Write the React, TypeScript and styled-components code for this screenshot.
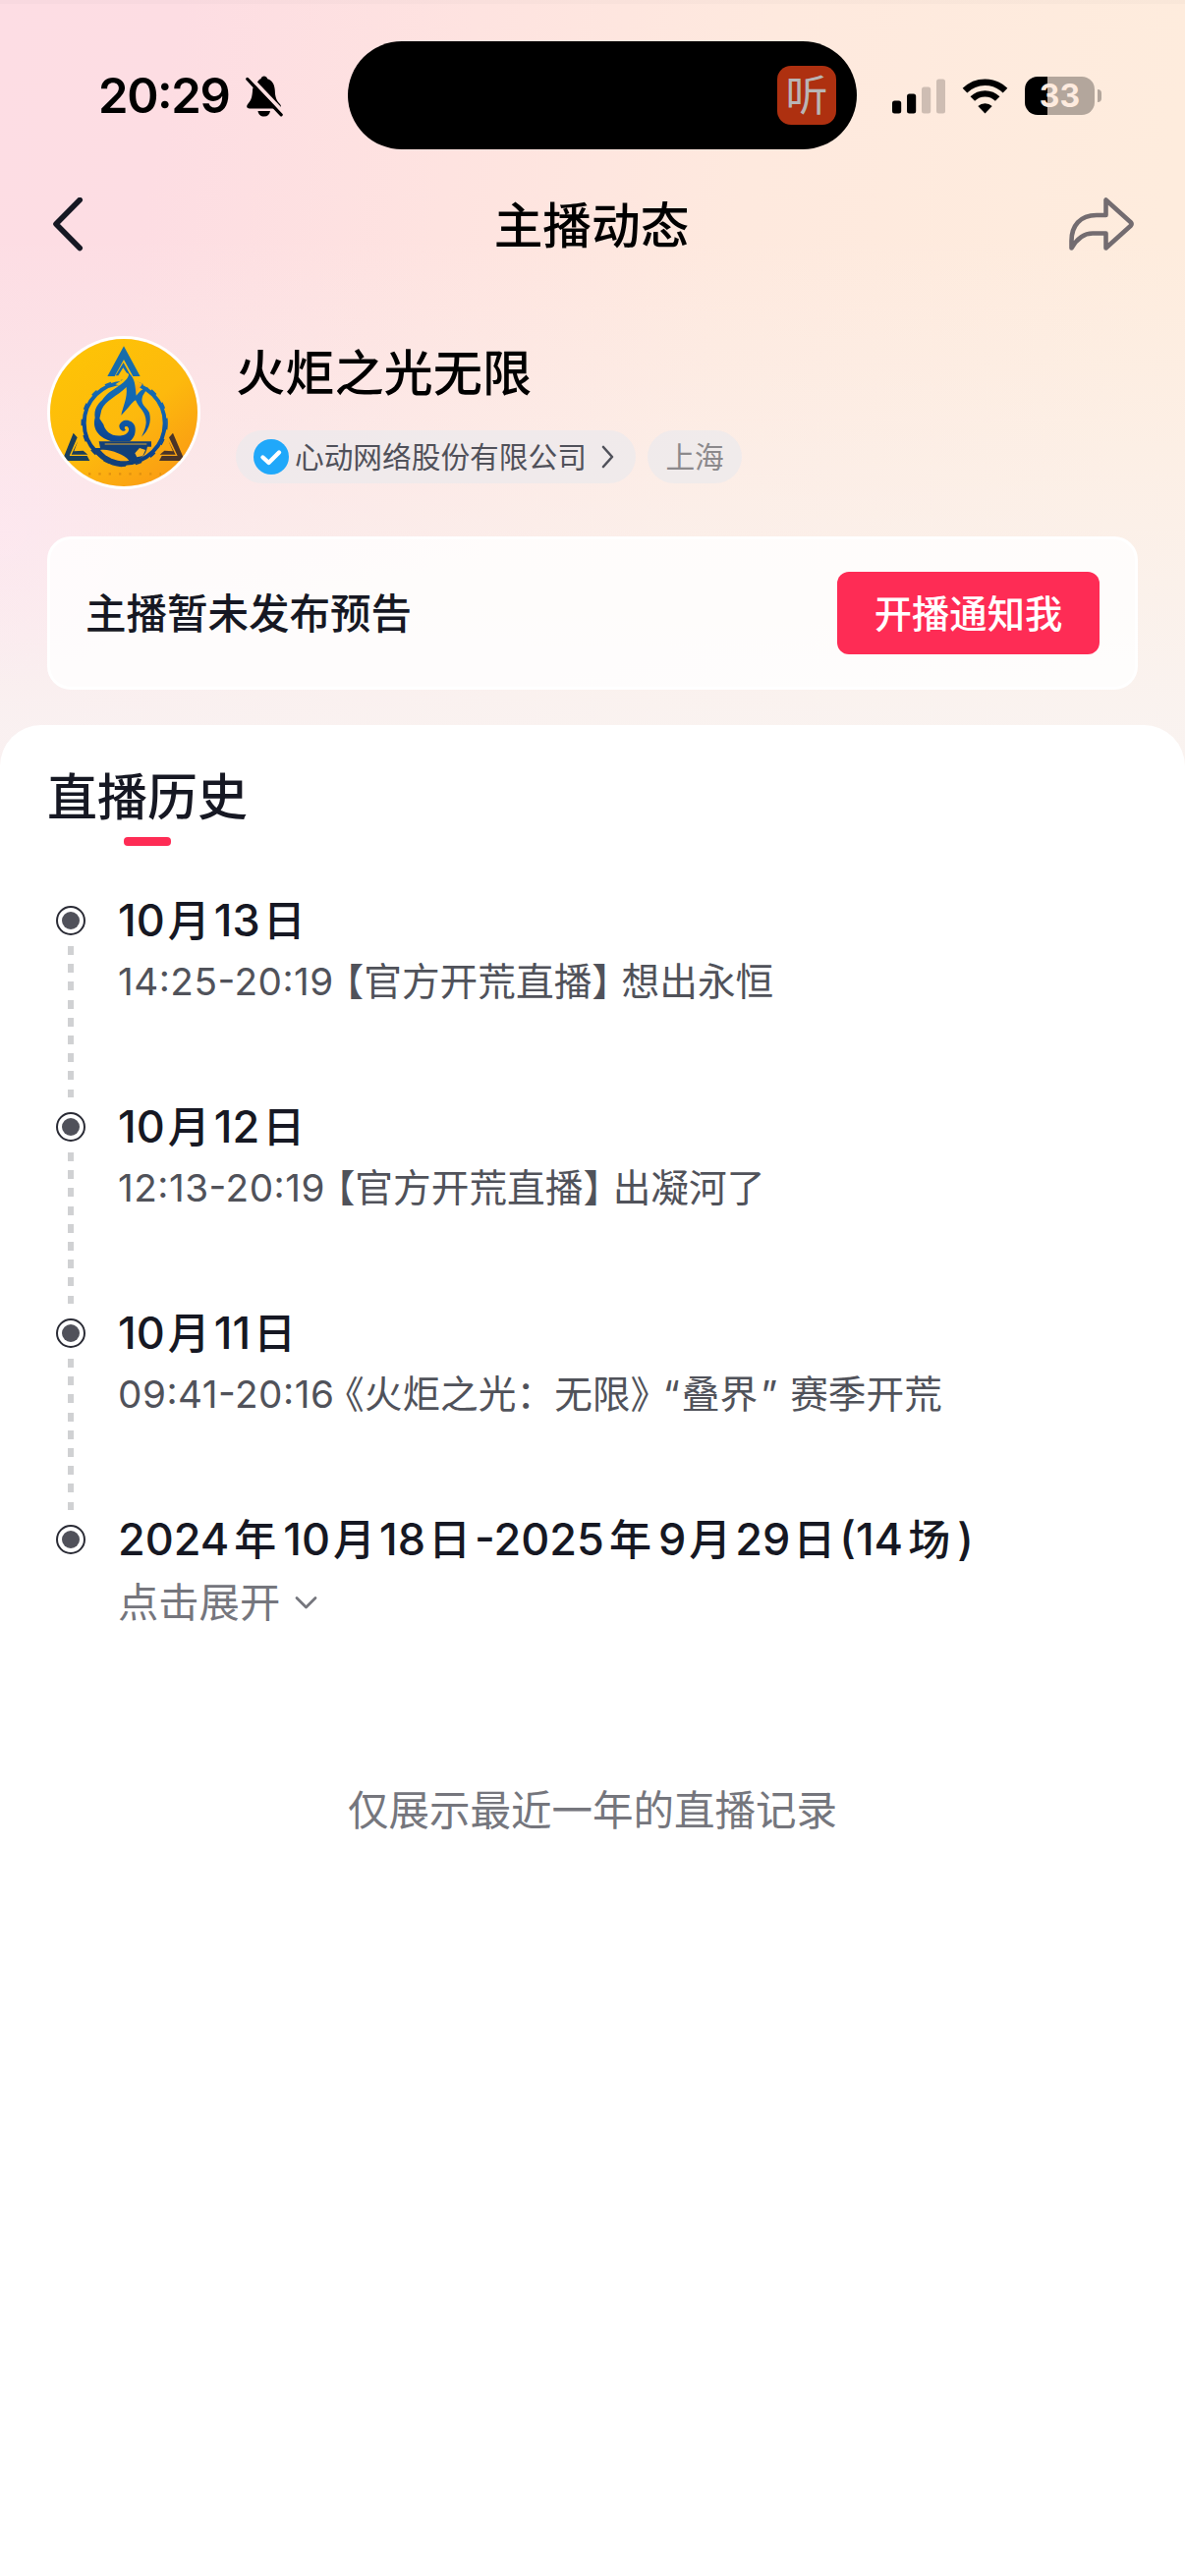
import React from "react";
import styled, { createGlobalStyle } from "styled-components";

interface HistoryItem {
  date: string;
  time: string;
  title: string;
}

const history: HistoryItem[] = [
  { date: "10月13日", time: "14:25-20:19", title: "【官方开荒直播】 想出永恒" },
  { date: "10月12日", time: "12:13-20:19", title: "【官方开荒直播】 出凝河了" },
  { date: "10月11日", time: "09:41-20:16", title: "《火炬之光：无限》 “叠界” 赛季开荒" },
];

const GlobalStyle = createGlobalStyle`
  * {
    box-sizing: border-box;
  }

  body {
    margin: 0;
    background: #ffffff;
    font-family: Inter, "Noto Sans CJK SC", sans-serif;
    color: #161823;
  }

  svg {
    display: block;
    flex: none;
  }
`;

const Page = styled.div`
  width: 1206px;
  min-height: 2622px;
  display: flex;
  flex-direction: column;
  background:
    linear-gradient(180deg, rgba(0, 0, 0, 0.02) 0 4px, transparent 4px),
    radial-gradient(circle at 0 540px, rgba(255, 230, 243, 0.45), transparent 160px),
    linear-gradient(180deg, rgba(249, 244, 243, 0) 240px, rgba(249, 244, 243, 0.85) 740px),
    linear-gradient(100deg, #fddde4 0, #fddde3 180px, #fee3e0 480px, #fee9de 780px, #feecdd 1206px);
`;

const StatusBar = styled.div`
  display: grid;
  grid-template-columns: 354px 518px 334px;
  align-items: center;
  height: 174px;
  padding-top: 20px;
`;

const Clock = styled.div`
  display: flex;
  align-items: center;
  gap: 17px;
  padding: 1px 0 0 100px;
  color: #000000;
  font-size: 49px;
  font-weight: 600;
  font-feature-settings: "calt";
  letter-spacing: -1.4px;
`;

const Island = styled.div`
  display: flex;
  align-items: center;
  justify-content: flex-end;
  height: 110px;
  padding-right: 21px;
  border-radius: 55px;
  background: #000000;
`;

const AudioApp = styled.div`
  display: flex;
  align-items: center;
  justify-content: center;
  width: 60px;
  height: 60px;
  border-radius: 14px;
  background: #ae3010;
  color: #b9b5b5;
  font-size: 43px;
  line-height: 60px;
`;

const Indicators = styled.div`
  display: flex;
  align-items: center;
  padding: 1px 0 0 36px;
  gap: 17px;
`;

const Battery = styled.div`
  display: flex;
  align-items: center;
  gap: 3px;
`;

const BatteryBody = styled.div<{ $level: number }>`
  width: 71px;
  height: 39px;
  border-radius: 13px;
  background: linear-gradient(
    90deg,
    #000000 ${({ $level }) => $level}%,
    #b3a69c ${({ $level }) => $level}%
  );
  color: #feebdf;
  font-size: 32px;
  font-weight: 700;
  line-height: 39px;
  text-align: center;
`;

const BatteryTip = styled.div`
  width: 4px;
  height: 13px;
  border-radius: 0 4px 4px 0;
  background: #b3a69c;
`;

const NavBar = styled.div`
  display: grid;
  grid-template-columns: 1fr auto 1fr;
  align-items: center;
  height: 110px;
  padding: 0 51px 0 52px;

  svg:last-child {
    justify-self: end;
  }
`;

const NavTitle = styled.h1`
  margin: 0;
  padding: 2px 3px 0 0;
  color: #000000;
  font-size: 49.7px;
  font-weight: 500;
  line-height: 60px;
`;

const Profile = styled.div`
  display: flex;
  gap: 36px;
  height: 214px;
  padding: 58px 48px 0;
`;

const Avatar = styled.div`
  width: 156px;
  height: 156px;
  flex: none;
  overflow: hidden;
  border: 3px solid #ffffff;
  border-radius: 50%;
`;

const ProfileInfo = styled.div`
  display: flex;
  flex-direction: column;
  padding-top: 8px;
`;

const Name = styled.div`
  color: #000000;
  font-size: 50.2px;
  font-weight: 500;
  line-height: 60px;
`;

const Tags = styled.div`
  display: flex;
  gap: 12px;
  margin-top: 28px;
`;

const Tag = styled.div<{ $muted?: boolean }>`
  display: flex;
  align-items: center;
  height: 54px;
  padding: 0 ${({ $muted }) => ($muted ? "18.5px" : "22px 0 18px")};
  border-radius: 27px;
  background: rgba(236, 234, 236, 0.75);
  color: ${({ $muted }) => ($muted ? "#8c898c" : "#50515a")};
  font-size: 29.7px;
  line-height: 54px;

  svg:first-child {
    margin-right: 6px;
  }

  svg:last-child {
    margin-left: 15px;
  }
`;

const NoticeCard = styled.div`
  display: flex;
  align-items: center;
  justify-content: space-between;
  height: 156px;
  margin: 48px 48px 0;
  padding: 0 36px;
  border: 3px solid #ffffff;
  border-radius: 24px;
  background: rgba(255, 255, 255, 0.8);
  font-size: 41.5px;
  font-weight: 500;
`;

const NoticeText = styled.span`
  padding-bottom: 4px;
`;

const NotifyButton = styled.button`
  width: 267px;
  height: 84px;
  padding: 0 0 3px;
  border: 0;
  border-radius: 12px;
  background: #fe2c55;
  color: #ffffff;
  font: inherit;
  font-size: 38.3px;
`;

const Panel = styled.section`
  flex: 1;
  margin-top: 36px;
  padding: 44px 48px 0;
  border-radius: 42px 42px 0 0;
  background: #ffffff;
`;

const Heading = styled.h2`
  margin: 0;
  font-size: 51px;
  font-weight: 500;
  line-height: 60px;
`;

const Underline = styled.div`
  width: 48px;
  height: 9px;
  margin: 10px 0 46px 78px;
  border-radius: 4px;
  background: #fe2c55;
`;

const Entry = styled.div`
  display: flex;
  gap: 33px;
  height: 210px;
  padding-left: 9px;
`;

const Rail = styled.div`
  display: flex;
  flex-direction: column;
  align-items: center;
  gap: 11px;
  width: 30px;
  padding-top: 15px;
`;

const Dot = styled.div`
  display: flex;
  align-items: center;
  justify-content: center;
  width: 30px;
  height: 30px;
  flex: none;
  border: 2px solid #2a2b35;
  border-radius: 50%;

  &::after {
    content: "";
    width: 18px;
    height: 18px;
    border-radius: 50%;
    background: #50515a;
  }
`;

const Dashes = styled.div`
  width: 6px;
  height: 155px;
  background: repeating-linear-gradient(180deg, #d0d1d3 0 9px, transparent 9px 18.2px);
`;

const EntryDate = styled.div`
  font-size: 45px;
  font-weight: 550;
  line-height: 60px;
  white-space: nowrap;
`;

// Wide characters (年, 场) take a little more air than the narrow 月 and 日
const DateUnit = styled.span<{ $wide: boolean }>`
  margin: ${({ $wide }) => ($wide ? "0 7px 0 5px" : "0 4px 0 3px")};
  font-size: 43px;
  font-weight: 500;
`;

const EntryDetail = styled.div`
  margin-top: 6px;
  color: #50525a;
  font-size: 38.7px;
  line-height: 52px;
  white-space: nowrap;
`;

const EntryTime = styled.span`
  margin-right: 11px;
  font-feature-settings: "calt";
  letter-spacing: 0.5px;
`;

const Bracket = styled.span`
  font-feature-settings: "halt";
`;

const Quote = styled.span`
  margin: 0 2px 0 3px;
`;

const Expand = styled.div`
  display: flex;
  align-items: center;
  gap: 15px;
  margin-top: 8px;
  color: #75767d;
  font-size: 41.3px;
  line-height: 52px;
`;

const Footnote = styled.p`
  margin: 66px 0 0;
  color: #75767d;
  font-size: 41.5px;
  line-height: 60px;
  text-align: center;
`;

const BellOffIcon = () => (
  <svg width="38" height="42" viewBox="0 0 38 42">
    <path
      d="M12 6.500C13 4.500 14.500 3.500 15.500 3.200C16 1.300 17.200.5 18.800.5C20.400.5 21.600 1.300 22.200 3.200C27.500 5 29.500 9.500 29.800 15C30 22 31.500 25.500 34.500 28.500C37 31 36 33.500 33.500 33.500H4C1 33.500.2 31 2.500 28.500C5.500 25.500 6.500 22 7 16C7.100 14.500 7 13.500 7.500 12.500Z"
      fill="#000"
    />
    <path d="M12.500 36H25C24.500 39.500 22.500 41.500 18.800 41.500C15 41.500 13 39.500 12.500 36Z" fill="#000" />
    <path d="M4.500 1.500L39 38" stroke="#fee0e1" strokeWidth="4" />
    <path d="M1.800 3.500L36.200 39.800" stroke="#000" strokeWidth="3.200" strokeLinecap="round" />
  </svg>
);

const SignalIcon = () => (
  <svg width="54" height="36" viewBox="0 0 54 36">
    <rect x="0" y="22.500" width="9.200" height="13" rx="2.500" fill="#000" />
    <rect x="15" y="15.500" width="9.200" height="20" rx="2.500" fill="#000" />
    <rect x="30" y="8.500" width="9.200" height="27" rx="2.500" fill="#cebdb3" />
    <rect x="45" y="0.500" width="9" height="35" rx="2.500" fill="#cebdb3" />
  </svg>
);

const WifiIcon = () => (
  <svg width="47" height="36" viewBox="0 0 47 36">
    <path d="M3 12.200A29 29 0 0 1 44 12.200" fill="none" stroke="#000" strokeWidth="6.600" />
    <path d="M10.800 20.600A18 18 0 0 1 36.200 20.600" fill="none" stroke="#000" strokeWidth="6.400" />
    <path d="M16.300 28A10.500 10.500 0 0 1 30.700 28L23.500 35.500Z" fill="#000" />
  </svg>
);

const BackIcon = () => (
  <svg width="34" height="56" viewBox="0 0 34 56" fill="none" stroke="#161823" strokeWidth="5.600">
    <path d="M29.200 2.500L5 27L29.200 51.500" strokeLinecap="round" strokeLinejoin="round" />
  </svg>
);

const ShareIcon = () => (
  <svg width="68" height="56" viewBox="0 0 68 56" fill="none" stroke="#736c70" strokeWidth="4.600">
    <path
      d="M38.500 2.500V18H29C12 18 3.500 29 3.500 44V51.500C8.500 43 15 36.500 25 36.500H38.500V51.500L63.500 29Q65.500 27 63.500 25Z"
      strokeLinejoin="round"
    />
  </svg>
);

const VerifiedIcon = () => (
  <svg width="36" height="36" viewBox="0 0 36 36">
    <circle cx="18" cy="18" r="18" fill="#20a8fa" />
    <path
      d="M9.500 18.500L15.500 24L26 13.500"
      fill="none"
      stroke="#fff"
      strokeWidth="4.400"
      strokeLinecap="round"
      strokeLinejoin="round"
    />
  </svg>
);

const ChevronRight = () => (
  <svg width="13" height="24" viewBox="0 0 13 24" fill="none" stroke="#50515a" strokeWidth="2.600">
    <path d="M2 2L11 12L2 22" strokeLinecap="round" strokeLinejoin="round" />
  </svg>
);

const ChevronDown = () => (
  <svg width="23" height="14" viewBox="0 0 23 14" fill="none" stroke="#75767d" strokeWidth="2.800">
    <path d="M2 2.500L11.500 12L21 2.500" strokeLinecap="round" strokeLinejoin="round" />
  </svg>
);

const TorchEmblem = () => (
  <svg width="150" height="150" viewBox="63 75 450 450">
    <defs>
      <linearGradient id="gold" x1="0" y1="0" x2="0.800" y2="1">
        <stop offset="0" stopColor="#fec604" />
        <stop offset="0.600" stopColor="#fdb90d" />
        <stop offset="1" stopColor="#fa9a14" />
      </linearGradient>
      <linearGradient id="steel" gradientUnits="userSpaceOnUse" x1="330" y1="90" x2="240" y2="470">
        <stop offset="0" stopColor="#1b6fa6" />
        <stop offset="0.450" stopColor="#1268b4" />
        <stop offset="0.800" stopColor="#0c4490" />
        <stop offset="1" stopColor="#123a63" />
      </linearGradient>
    </defs>
    <rect x="63" y="75" width="450" height="450" fill="url(#gold)" />
    <g fill="url(#steel)">
      <path d="M288 97L338 189H316L288 138L260 189H238Z" />
      <path d="M287 147L308 186L296 178L286 163L271 187H263Z" />
    </g>
    <g fill="#193e5b">
      <path d="M134 362L146 376L122 432H176L184 447H100Z" />
      <path d="M148 386L136 418L164 416L178 428H128Z" />
    </g>
    <g fill="#4a3428">
      <path d="M438 362L426 376L452 432H404L396 447H474Z" />
      <path d="M424 386L438 418L412 416L398 428H446Z" />
    </g>
    <circle cx="290" cy="332" r="123" fill="none" stroke="url(#steel)" strokeWidth="12" />
    <circle cx="290" cy="332" r="130" fill="none" stroke="url(#steel)" strokeWidth="5" strokeDasharray="20 30" />
    <path d="M300 190L345 212L326 240L296 232L280 218L262 214Z" fill="url(#gold)" />
    <path
      d="M304 180C300 214 244 226 222 262C208 274 196 290 200 316C192 346 206 374 250 388H306C320 378 326 360 322 342C314 318 280 316 274 340C274 354 288 362 294 352C288 348 290 340 298 342C310 350 300 368 282 370C250 374 232 358 226 336L214 318L220 292C232 262 268 250 296 222C300 256 284 284 280 308C300 290 308 272 324 262C336 290 356 296 356 330C354 350 348 362 342 374C362 356 374 330 366 300C358 282 336 276 346 248L362 222C342 228 334 238 326 248C322 218 324 198 304 180Z"
      fill="url(#steel)"
    />
    <path
      d="M212 388H372V404H360C356 430 338 446 310 448C300 458 296 464 280 466C244 462 212 444 190 408H216Z"
      fill="#134078"
    />
    <path d="M230 396H358" stroke="#dfa62c" strokeWidth="3" />
    <path d="M216 414C246 410 288 428 304 446C280 452 240 444 216 414Z" fill="#fdae12" />
    <path d="M322 424L336 408L354 414L346 432L328 436Z" fill="#fdb625" />
    <path d="M180 487H402" stroke="#e0900f" strokeWidth="7" strokeDasharray="7 24" />
  </svg>
);

const renderDate = (text: string) =>
  text
    .split(/([年月日场])/)
    .filter(Boolean)
    .map((part, index) =>
      /[年月日场]/.test(part) ? (
        <DateUnit key={index} $wide={/[年场]/.test(part)}>
          {part}
        </DateUnit>
      ) : (
        part
      )
    );

// Brackets are set half-width, the rest of the title keeps its full advance
const renderTitle = (text: string) =>
  text.split(/([【】《》“”])/).map((part, index) => {
    if (/[【】《》]/.test(part)) return <Bracket key={index}>{part}</Bracket>;
    if (/[“”]/.test(part)) return <Quote key={index}>{part}</Quote>;
    return part;
  });

export default function App() {
  return (
    <>
      <GlobalStyle />
      <Page>
        <StatusBar>
          <Clock>
            20:29
            <BellOffIcon />
          </Clock>
          <Island>
            <AudioApp>听</AudioApp>
          </Island>
          <Indicators>
            <SignalIcon />
            <WifiIcon />
            <Battery>
              <BatteryBody $level={33}>33</BatteryBody>
              <BatteryTip />
            </Battery>
          </Indicators>
        </StatusBar>

        <NavBar>
          <BackIcon />
          <NavTitle>主播动态</NavTitle>
          <ShareIcon />
        </NavBar>

        <Profile>
          <Avatar>
            <TorchEmblem />
          </Avatar>
          <ProfileInfo>
            <Name>火炬之光无限</Name>
            <Tags>
              <Tag>
                <VerifiedIcon />
                心动网络股份有限公司
                <ChevronRight />
              </Tag>
              <Tag $muted>上海</Tag>
            </Tags>
          </ProfileInfo>
        </Profile>

        <NoticeCard>
          <NoticeText>主播暂未发布预告</NoticeText>
          <NotifyButton>开播通知我</NotifyButton>
        </NoticeCard>

        <Panel>
          <Heading>直播历史</Heading>
          <Underline />
          {history.map((item) => (
            <Entry key={item.date}>
              <Rail>
                <Dot />
                <Dashes />
              </Rail>
              <div>
                <EntryDate>{renderDate(item.date)}</EntryDate>
                <EntryDetail>
                  <EntryTime>{item.time}</EntryTime>
                  {renderTitle(item.title)}
                </EntryDetail>
              </div>
            </Entry>
          ))}
          <Entry>
            <Rail>
              <Dot />
            </Rail>
            <div>
              <EntryDate>{renderDate("2024年10月18日-2025年9月29日(14场)")}</EntryDate>
              <Expand>
                点击展开
                <ChevronDown />
              </Expand>
            </div>
          </Entry>
          <Footnote>仅展示最近一年的直播记录</Footnote>
        </Panel>
      </Page>
    </>
  );
}
